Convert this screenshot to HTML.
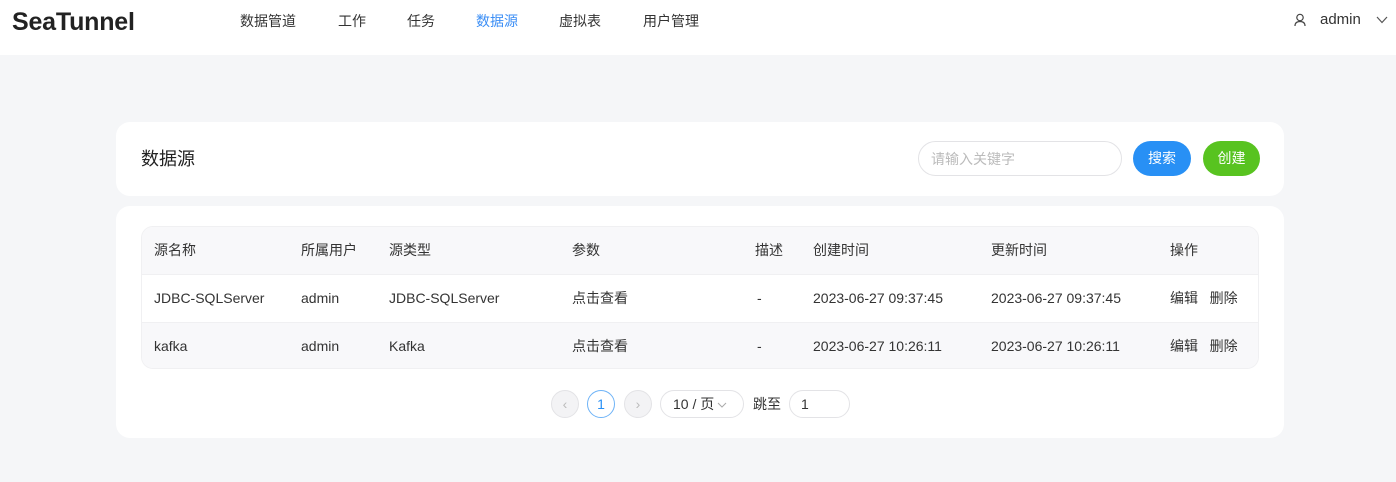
<!DOCTYPE html>
<html><head><meta charset="utf-8"><style>
*{margin:0;padding:0;box-sizing:border-box}
body{width:1396px;height:482px;background:#f5f6f8;font-family:"Liberation Sans","Noto Sans CJK SC",sans-serif;color:#333;font-size:14px;position:relative;overflow:hidden;line-height:20px}
.hd{position:absolute;left:0;top:0;width:1396px;height:55px;background:#fff}
.logo{position:absolute;left:12px;top:7px;font-size:25px;line-height:30px;font-weight:bold;color:#222;letter-spacing:-0.2px}
.nav{position:absolute;top:11px;font-size:14px;color:#333;line-height:20px}
.a{position:absolute;white-space:nowrap}
.card{position:absolute;left:116px;width:1168px;background:#fff;border-radius:14px}
.tbl{position:absolute;left:141px;top:226px;width:1118px;height:143px;border-radius:12px;overflow:hidden;background:#fff;border:1px solid #f0f0f2}
.r{position:absolute;left:0;width:100%;height:48px}
.t{position:absolute;font-size:14px;color:#333;white-space:nowrap;line-height:20px;top:0}
.pg{position:absolute;top:390px;height:28px;border:1px solid #e3e3e6;border-radius:14px;background:#fff;font-size:14px;text-align:center;line-height:26px}
</style></head><body>
<div class="hd">
<div class="logo">SeaTunnel</div>
<div class="nav" style="left:240px">数据管道</div>
<div class="nav" style="left:338px">工作</div>
<div class="nav" style="left:407px">任务</div>
<div class="nav" style="left:476px;color:#3b8ef5">数据源</div>
<div class="nav" style="left:559px">虚拟表</div>
<div class="nav" style="left:643px">用户管理</div>
<svg class="a" style="left:1294px;top:13px" width="12" height="14" viewBox="0 0 12 14"><circle cx="6" cy="4.5" r="3.2" fill="none" stroke="#444" stroke-width="1.2"/><path d="M1 13 Q1 8.5 6 8.5 Q11 8.5 11 13" fill="none" stroke="#444" stroke-width="1.2"/></svg>
<div class="nav" style="left:1320px;top:10px;font-size:15px">admin</div>
<svg class="a" style="left:1376px;top:16px" width="12" height="8" viewBox="0 0 12 8"><path d="M1 1 L6 6.5 L11 1" fill="none" stroke="#555" stroke-width="1.2"/></svg>
</div>

<div class="card" style="top:122px;height:74px"></div>
<div class="a" style="left:141px;top:147px;font-size:18px;line-height:24px;color:#222">数据源</div>
<div class="a" style="left:918px;top:141px;width:204px;height:35px;border:1px solid #e3e3e6;border-radius:18px;color:#bbb;padding:7px 12px;font-size:14px">请输入关键字</div>
<div class="a" style="left:1133px;top:141px;width:58px;height:35px;border-radius:18px;background:#2890f5;color:#fff;text-align:center;line-height:35px">搜索</div>
<div class="a" style="left:1203px;top:141px;width:57px;height:35px;border-radius:18px;background:#58c320;color:#fff;text-align:center;line-height:35px">创建</div>

<div class="card" style="top:206px;height:232px"></div>
<div class="tbl">
<div class="r" style="top:0;background:#f8f8fa;border-bottom:1px solid #f0f0f2"></div>
<div class="r" style="top:95px;background:#f8f8fa;border-top:1px solid #f0f0f2"></div>
</div>
<div style="position:absolute;left:0;top:240px;width:100%">
<div class="t" style="left:154px">源名称</div>
<div class="t" style="left:301px">所属用户</div>
<div class="t" style="left:389px">源类型</div>
<div class="t" style="left:572px">参数</div>
<div class="t" style="left:755px">描述</div>
<div class="t" style="left:813px">创建时间</div>
<div class="t" style="left:991px">更新时间</div>
<div class="t" style="left:1170px">操作</div>
</div>
<div style="position:absolute;left:0;top:288px;width:100%">
<div class="t" style="left:154px">JDBC-SQLServer</div>
<div class="t" style="left:301px">admin</div>
<div class="t" style="left:389px">JDBC-SQLServer</div>
<div class="t" style="left:572px">点击查看</div>
<div class="t" style="left:757px">-</div>
<div class="t" style="left:813px">2023-06-27 09:37:45</div>
<div class="t" style="left:991px">2023-06-27 09:37:45</div>
<div class="t" style="left:1170px">编辑&nbsp;&nbsp;&nbsp;删除</div>
</div>
<div style="position:absolute;left:0;top:336px;width:100%">
<div class="t" style="left:154px">kafka</div>
<div class="t" style="left:301px">admin</div>
<div class="t" style="left:389px">Kafka</div>
<div class="t" style="left:572px">点击查看</div>
<div class="t" style="left:757px">-</div>
<div class="t" style="left:813px">2023-06-27 10:26:11</div>
<div class="t" style="left:991px">2023-06-27 10:26:11</div>
<div class="t" style="left:1170px">编辑&nbsp;&nbsp;&nbsp;删除</div>
</div>

<div class="pg" style="left:551px;width:28px;background:#f3f3f5;color:#bbb">‹</div>
<div class="pg" style="left:587px;width:28px;border-color:#6eb3f7;color:#2890f5">1</div>
<div class="pg" style="left:624px;width:28px;background:#f3f3f5;color:#bbb">›</div>
<div class="pg" style="left:660px;width:84px;text-align:left;padding-left:12px">10 / 页<svg style="margin-left:3px;vertical-align:middle" width="10" height="6" viewBox="0 0 10 6"><path d="M1 1 L5 5 L9 1" fill="none" stroke="#aaa" stroke-width="1"/></svg></div>
<div class="a" style="left:753px;top:394px">跳至</div>
<div class="pg" style="left:789px;width:61px;text-align:left;padding-left:11px">1</div>
</body></html>
